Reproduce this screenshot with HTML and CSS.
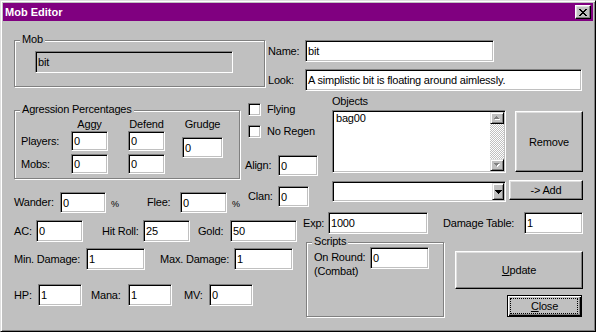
FILE: index.html
```html
<!DOCTYPE html>
<html>
<head>
<meta charset="utf-8">
<title>Mob Editor</title>
<link rel="stylesheet" href="styles.css">
</head>
<body>
<div class="win">
  <div class="titlebar">
    <span class="title">Mob Editor</span>
    <div class="xbtn"><svg width="8" height="7" viewBox="0 0 8 7" shape-rendering="crispEdges"><path fill="#000" d="M0 0h2v1H0zM6 0h2v1H6zM1 1h2v1H1zM5 1h2v1H5zM2 2h4v1H2zM3 3h2v1H3zM2 4h4v1H2zM1 5h2v1H1zM5 5h2v1H5zM0 6h2v1H0zM6 6h2v1H6z"/></svg></div>
  </div>
  <div class="client">
    <div class="band1">
      <div class="group g-mob">
        <span class="legend">Mob</span>
        <div class="field disabled f-mob">bit</div>
      </div>
      <div class="namelook">
        <div class="row r-name"><span class="lbl w-name">Name:</span><div class="field f-name">bit</div></div>
        <div class="row r-look"><span class="lbl w-name">Look:</span><div class="field f-look">A simplistic bit is floating around aimlessly.</div></div>
      </div>
    </div>

    <div class="band2">
      <div class="b2-left">
        <div class="group g-agr">
          <span class="legend">Agression Percentages</span>
          <div class="agr-grid">
            <span class="hdr c2">Aggy</span>
            <span class="hdr c4">Defend</span>
            <span class="hdr c6">Grudge</span>
            <span class="lbl rl r2">Players:</span>
            <div class="field fa c2 r2">0</div>
            <div class="field fa c4 r2">0</div>
            <div class="field f-grudge c6">0</div>
            <span class="lbl rl r4">Mobs:</span>
            <div class="field fa c2 r4">0</div>
            <div class="field fa c4 r4">0</div>
          </div>
        </div>
        <div class="row r-wander">
          <span class="lbl w-wander">Wander:</span>
          <div class="field f-wander">0</div>
          <span class="pct w-pct">%</span>
          <span class="lbl w-flee">Flee:</span>
          <div class="field f-flee">0</div>
          <span class="pct">%</span>
        </div>
      </div>

      <div class="b2-mid">
        <div class="cb-row cb-fly"><div class="cb"></div><span class="cb-lbl">Flying</span></div>
        <div class="cb-row cb-regen"><div class="cb"></div><span class="cb-lbl">No Regen</span></div>
        <div class="row r-align"><span class="lbl w-align">Align:</span><div class="field f-align">0</div></div>
        <div class="row r-clan"><span class="lbl w-clan">Clan:</span><div class="field f-clan">0</div></div>
      </div>

      <div class="b2-right">
        <span class="obj-lbl">Objects</span>
        <div class="list-row">
          <div class="field list">
            <div class="list-items"><div class="item">bag00</div></div>
            <div class="sb">
              <div class="sb-btn"><svg width="6" height="4" viewBox="0 0 6 4" shape-rendering="crispEdges"><path fill="#fff" transform="translate(1 1)" d="M2 0h1v1H2zM1 1h3v1H1zM0 2h5v1H0z"/><path fill="#808080" d="M2 0h1v1H2zM1 1h3v1H1zM0 2h5v1H0z"/></svg></div>
              <div class="sb-track"></div>
              <div class="sb-btn"><svg width="6" height="4" viewBox="0 0 6 4" shape-rendering="crispEdges"><path fill="#fff" transform="translate(1 1)" d="M0 0h5v1H0zM1 1h3v1H1zM2 2h1v1H2z"/><path fill="#808080" d="M0 0h5v1H0zM1 1h3v1H1zM2 2h1v1H2z"/></svg></div>
            </div>
          </div>
          <button class="btn b-remove">Remove</button>
        </div>
        <div class="combo-row">
          <div class="field combo">
            <div class="combo-text"></div>
            <div class="combo-btn"><svg width="7" height="4" viewBox="0 0 7 4" shape-rendering="crispEdges"><path fill="#000" d="M0 0h7v1H0zM1 1h5v1H1zM2 2h3v1H2zM3 3h1v1H3z"/></svg></div>
          </div>
          <button class="btn b-add">-&gt; Add</button>
        </div>
      </div>
    </div>

    <div class="band3">
      <div class="b3-left">
        <div class="row r-ac">
          <span class="lbl w-ac">AC:</span><div class="field f47">0</div>
          <span class="lbl w-hit">Hit Roll:</span><div class="field f47">25</div>
          <span class="lbl w-gold">Gold:</span><div class="field f-gold">50</div>
        </div>
        <div class="row r-min">
          <span class="lbl w-min">Min. Damage:</span><div class="field f59">1</div>
          <span class="lbl w-max">Max. Damage:</span><div class="field f59">1</div>
        </div>
        <div class="row r-hp">
          <span class="lbl w-hp">HP:</span><div class="field f44">1</div>
          <span class="lbl w-mana">Mana:</span><div class="field f44">1</div>
          <span class="lbl w-mv">MV:</span><div class="field f44">0</div>
        </div>
      </div>
      <div class="b3-right">
        <div class="row r-exp">
          <span class="lbl w-exp">Exp:</span><div class="field f-exp">1000</div>
          <span class="lbl w-dt">Damage Table:</span><div class="field f59">1</div>
        </div>
        <div class="bottom-row">
          <div class="group g-scripts">
            <span class="legend">Scripts</span>
            <div class="sc-inner">
              <div class="sc-lbl">On Round:<br>(Combat)</div>
              <div class="field f59 sc-field">0</div>
            </div>
          </div>
          <div class="btn-col">
            <button class="btn b-update"><span><u>U</u>pdate</span></button>
            <button class="btn b-close"><span><u>C</u>lose</span></button>
          </div>
        </div>
      </div>
    </div>
  </div>
</div>
</body>
</html>
```
FILE: styles.css
```css
* { box-sizing: border-box; }

body {
  margin: 0;
  background: #c0c0c0;
  font-family: "Liberation Sans", Arial, sans-serif;
  font-size: 11px;
  letter-spacing: -0.2px;
  color: #000;
}

.win {
  width: 596px;
  height: 332px;
  background: #c0c0c0;
  border: 1px solid;
  border-color: #dfdfdf #000 #000 #dfdfdf;
  box-shadow: inset 1px 1px #fff, inset -1px -1px #808080;
  padding: 2px;
  display: flex;
  flex-direction: column;
  overflow: hidden;
}

.titlebar {
  height: 18px;
  flex: none;
  background: #800080;
  display: flex;
  align-items: center;
  padding: 0 2px;
}

.title {
  color: #fff;
  font-weight: bold;
  letter-spacing: 0;
}

.xbtn {
  margin-left: auto;
  width: 16px;
  height: 14px;
  background: #c0c0c0;
  border: 1px solid;
  border-color: #fff #000 #000 #fff;
  box-shadow: inset -1px -1px #808080, inset 1px 1px #dfdfdf;
  padding: 3px 0 0 3px;
}
.xbtn svg { display: block; }

.client {
  flex: 1;
  display: flex;
  flex-direction: column;
}

/* generic controls */
.row { display: flex; align-items: center; }
.lbl { flex: none; white-space: nowrap; line-height: 13px; }

.field {
  flex: none;
  background: #fff;
  border: 1px solid;
  border-color: #808080 #fff #fff #808080;
  box-shadow: inset 1px 1px #000, inset -1px -1px #c0c0c0;
  padding: 0 2px;
  height: 22px;
  display: flex;
  align-items: center;
  white-space: nowrap;
  overflow: hidden;
}
.field.disabled { background: #c0c0c0; }

.btn {
  font: inherit;
  letter-spacing: inherit;
  color: #000;
  padding: 0;
  margin: 0;
  flex: none;
  background: #c0c0c0;
  border: 1px solid;
  border-color: #fff #000 #000 #fff;
  box-shadow: inset -1px -1px #808080, inset 1px 1px #dfdfdf;
  display: flex;
  align-items: center;
  justify-content: center;
}

.group {
  position: relative;
  flex: none;
  border: 1px solid #808080;
  box-shadow: inset 1px 1px #fff, 1px 1px #fff;
}
.legend {
  position: absolute;
  top: -8px;
  left: 5px;
  padding: 0 2px;
  line-height: 13px;
  background: #c0c0c0;
  white-space: nowrap;
}

/* band 1 */
.band1 { display: flex; align-items: flex-start; height: 74px; flex: none; }
.g-mob { margin: 19px 0 0 11px; width: 251px; height: 47px; }
.f-mob { margin: 10px 0 0 20px; width: 198px; }
.namelook { margin-left: 3px; display: flex; flex-direction: column; }
.r-name { margin-top: 19px; }
.r-look { margin-top: 7px; }
.w-name { width: 37px; }
.f-name { width: 189px; }
.f-look { width: 277px; }

/* band 2 */
.band2 { display: flex; align-items: flex-start; height: 117px; flex: none; }
.b2-left { width: 239px; flex: none; display: flex; flex-direction: column; }
.g-agr { margin: 15px 0 0 11px; width: 226px; height: 69px; }
.agr-grid {
  display: grid;
  grid-template-columns: 56px 37px 20px 37px 17px 41px;
  grid-template-rows: 20px 20px 3px 20px;
}
.hdr { grid-row: 1; align-self: end; text-align: center; line-height: 13px; white-space: nowrap; }
.c2 { grid-column: 2; }
.c4 { grid-column: 4; }
.c6 { grid-column: 6; }
.r2 { grid-row: 2; }
.r4 { grid-row: 4; }
.rl { grid-column: 1; align-self: center; padding-left: 6px; }
.fa { height: 20px; }
.f-grudge { grid-row: 2 / span 3; align-self: start; margin-top: 6px; height: 21px; }

.r-wander { margin: 13px 0 0 11px; }
.w-wander { width: 46px; }
.f-wander { width: 46px; height: 21px; }
.pct { font-size: 9px; margin-left: 5px; margin-top: 3px; flex: none; }
.w-pct { width: 36px; }
.w-flee { width: 33px; }
.f-flee { width: 47px; height: 21px; }

.b2-mid { width: 90px; flex: none; display: flex; flex-direction: column; }
.cb-row { display: flex; align-items: center; margin-left: 6px; }
.cb-fly { margin-top: 8px; }
.cb-regen { margin-top: 9px; }
.cb {
  width: 13px;
  height: 13px;
  flex: none;
  background: #fff;
  border: 1px solid;
  border-color: #808080 #fff #fff #808080;
  box-shadow: inset 1px 1px #000, inset -1px -1px #c0c0c0;
}
.cb-lbl { margin-left: 6px; line-height: 13px; white-space: nowrap; }
.r-align { margin: 17px 0 0 3px; }
.w-align { width: 33px; }
.f-align { width: 40px; height: 21px; }
.r-clan { margin: 10px 0 0 6px; }
.w-clan { width: 30px; }
.f-clan { width: 31px; height: 21px; }

.b2-right { width: 261px; flex: none; display: flex; flex-direction: column; }
.obj-lbl { line-height: 13px; }
.list-row { display: flex; align-items: flex-start; margin-top: 2px; }
.list {
  width: 174px;
  height: 63px;
  padding: 1px;
  align-items: stretch;
}
.list-items { flex: 1; background: #fff; }
.item { line-height: 13px; padding-left: 2px; }
.sb { width: 14px; flex: none; display: flex; flex-direction: column; }
.sb-btn, .combo-btn {
  flex: none;
  background: #c0c0c0;
  border: 1px solid;
  border-color: #dfdfdf #000 #000 #dfdfdf;
  box-shadow: inset 1px 1px #fff, inset -1px -1px #808080;
  display: flex;
  align-items: center;
  justify-content: center;
}
.sb-btn { height: 12px; }
.sb-btn svg, .combo-btn svg { display: block; }
.sb-track {
  flex: 1;
  background: repeating-conic-gradient(#c0c0c0 0% 25%, #fff 0% 50%) 0 0 / 2px 2px;
}
.b-remove { width: 68px; height: 61px; margin: 1px 0 0 9px; }

.combo-row { display: flex; align-items: flex-start; margin-top: 7px; }
.combo { width: 174px; height: 21px; padding: 1px; align-items: stretch; margin-top: 1px; }
.combo-text { flex: 1; }
.combo-btn { width: 12px; }
.b-add { width: 74px; height: 20px; margin-left: 3px; }

/* band 3 */
.band3 { display: flex; align-items: flex-start; flex: 1; }
.b3-left { width: 297px; flex: none; display: flex; flex-direction: column; }
.r-ac { margin: 8px 0 0 11px; }
.w-ac { width: 22px; }
.f47 { width: 47px; }
.w-hit { width: 41px; margin-left: 19px; }
.w-gold { width: 32px; margin-left: 8px; }
.f-gold { width: 67px; }
.r-min { margin: 6px 0 0 11px; }
.w-min { width: 72px; }
.f59 { width: 59px; }
.w-max { width: 74px; margin-left: 15px; }
.r-hp { margin: 14px 0 0 11px; }
.w-hp { width: 24px; }
.f44 { width: 44px; }
.w-mana { width: 37px; margin-left: 9px; }
.w-mv { width: 25px; margin-left: 12px; }

.b3-right { width: 293px; flex: none; display: flex; flex-direction: column; }
.r-exp { margin-left: 3px; }
.w-exp { width: 25px; }
.f-exp { width: 100px; }
.w-dt { width: 81px; margin-left: 15px; }

.bottom-row { display: flex; align-items: flex-start; }
.g-scripts { margin: 8px 0 0 6px; width: 138px; height: 75px; }
.sc-inner { display: flex; align-items: flex-start; }
.sc-lbl { width: 56px; margin: 7px 0 0 7px; line-height: 14px; white-space: nowrap; flex: none; }
.sc-field { margin-top: 4px; }

.btn-col { display: flex; flex-direction: column; margin: 17px 0 0 11px; }
.b-update { width: 128px; height: 38px; }
.b-close {
  position: relative;
  width: 75px;
  height: 22px;
  margin: 6px 0 0 52px;
  border: 1px solid #000;
  box-shadow: inset 1px 1px #fff, inset -1px -1px #000, inset -2px -2px #808080;
}
.b-close::after {
  content: "";
  position: absolute;
  top: 2px;
  left: 2px;
  right: 3px;
  bottom: 2px;
  border: 1px dotted #000;
}
```
